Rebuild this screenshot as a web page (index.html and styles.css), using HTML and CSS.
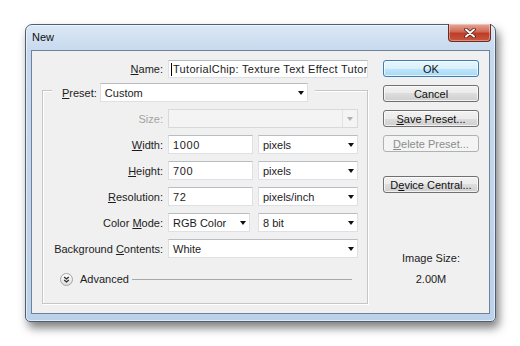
FILE: index.html
```html
<!DOCTYPE html>
<html lang="en">
<head>
  <meta charset="UTF-8" />
  <meta name="viewport" content="width=device-width, initial-scale=1.0" />
  <title>New</title>
  <link rel="stylesheet" href="styles.css">
</head>
<body>
  <div class="window">
    <div class="titlebar">
      <span class="title">New</span>
      <div class="close-btn">
        <svg width="12" height="10" viewBox="0 0 12 10">
          <path d="M2 1.5 L10 8.5 M10 1.5 L2 8.5" stroke="#5b1c12" stroke-width="3.6" stroke-linecap="round" />
          <path d="M2 1.5 L10 8.5 M10 1.5 L2 8.5" stroke="#ffffff" stroke-width="1.9" stroke-linecap="round" />
        </svg>
      </div>
    </div>

    <div class="client">
      <div class="form-col">
        <div class="row name-row">
          <label class="lbl"><u>N</u>ame:</label>
          <div class="field name-field"><span class="caret"></span>TutorialChip: Texture Text Effect Tutorial</div>
        </div>

        <div class="group">
          <div class="legend">
            <label><u>P</u>reset:</label>
            <div class="field combo preset-combo">Custom</div>
          </div>
          <div class="row">
            <label class="lbl lbl-disabled">Size:</label>
            <div class="field combo combo-disabled w-wide"></div>
          </div>
          <div class="row">
            <label class="lbl"><u>W</u>idth:</label>
            <div class="field w-num">1000</div>
            <div class="field combo w-unit">pixels</div>
          </div>
          <div class="row">
            <label class="lbl"><u>H</u>eight:</label>
            <div class="field w-num">700</div>
            <div class="field combo w-unit">pixels</div>
          </div>
          <div class="row">
            <label class="lbl"><u>R</u>esolution:</label>
            <div class="field w-num">72</div>
            <div class="field combo w-unit">pixels/inch</div>
          </div>
          <div class="row">
            <label class="lbl">Color <u>M</u>ode:</label>
            <div class="field combo w-mode">RGB Color</div>
            <div class="field combo w-unit">8 bit</div>
          </div>
          <div class="row">
            <label class="lbl">Background <u>C</u>ontents:</label>
            <div class="field combo w-wide">White</div>
          </div>
          <div class="advanced">
            <svg width="13" height="13" viewBox="0 0 13 13">
              <defs>
                <linearGradient id="advBg" x1="0" y1="0" x2="0" y2="1">
                  <stop offset="0" stop-color="#ffffff" />
                  <stop offset="1" stop-color="#dcdcdc" />
                </linearGradient>
              </defs>
              <circle cx="6.5" cy="6.5" r="6" fill="url(#advBg)" stroke="#a3a3a3" />
              <path d="M4.2 4 L6.5 6 L8.8 4 M4.2 7 L6.5 9 L8.8 7" fill="none" stroke="#2b2b2b" stroke-width="1.2" />
            </svg>
            <span>Advanced</span>
            <span class="adv-line"></span>
          </div>
        </div>
      </div>

      <div class="btn-col">
        <div class="btn btn-default">OK</div>
        <div class="btn">Cancel</div>
        <div class="btn"><u>S</u>ave Preset...</div>
        <div class="btn btn-disabled"><u>D</u>elete Preset...</div>
        <div class="btn btn-device">D<u>e</u>vice Central...</div>
        <div class="img-size">
          <div>Image Size:</div>
          <div class="img-value">2.00M</div>
        </div>
      </div>
    </div>
  </div>
</body>
</html>
```

FILE: styles.css
```css
body {
  margin: 0;
  width: 520px;
  height: 346px;
  overflow: hidden;
  background: #ffffff;
  font-family: "Liberation Sans", Arial, sans-serif;
  font-size: 11px;
  color: #1c1c1c;
}
u {
  text-decoration: underline;
  text-underline-offset: 1px;
}
.window {
  box-sizing: border-box;
  margin: 24px 0 0 25px;
  width: 471px;
  height: 298px;
  display: flex;
  flex-direction: column;
  border: 1px solid #4f5e70;
  border-radius: 7px 7px 5px 5px;
  background: linear-gradient(#dce8f5, #c6d9ee 26px, #bcd2ea);
  box-shadow: 3px 6px 10px rgba(0, 0, 0, 0.5), inset 0 0 0 1px rgba(255, 255, 255, 0.55);
}
.titlebar {
  height: 25px;
  display: flex;
  justify-content: space-between;
  align-items: flex-start;
}
.title {
  line-height: 25px;
  padding-left: 6px;
  color: #111;
}
.close-btn {
  box-sizing: border-box;
  width: 43px;
  height: 18px;
  margin: -1px 4px 0 0;
  display: flex;
  justify-content: center;
  align-items: center;
  border: 1px solid #6e2a1f;
  border-top: none;
  border-radius: 0 0 4px 4px;
  background: linear-gradient(#e6a898, #d06a56 45%, #bd3d27 55%, #c9563f);
  box-shadow: inset 0 0 0 1px rgba(255, 255, 255, 0.35);
}
.client {
  flex: 1;
  display: flex;
  margin: 0 5px 7px;
  border: 1px solid #6f8299;
  background: #f0f0f0;
}
.form-col {
  width: 337px;
  padding-top: 9px;
}
.row {
  display: flex;
  align-items: center;
  height: 19px;
  margin-top: 7px;
}
.name-row {
  height: 18px;
  margin-top: 0;
}
.lbl {
  width: 120px;
  margin-right: 5px;
  text-align: right;
  white-space: nowrap;
}
.name-row .lbl {
  width: 131px;
}
.lbl-disabled {
  color: #a3a3a3;
}
.field {
  box-sizing: border-box;
  height: 19px;
  display: flex;
  align-items: center;
  padding-left: 4px;
  background: #ffffff;
  border: 1px solid #dde1e6;
  border-top-color: #b9bcc1;
  white-space: nowrap;
  overflow: hidden;
}
.name-field {
  width: 200px;
  height: 18px;
  padding-left: 2px;
  letter-spacing: 0.3px;
}
.caret {
  flex: none;
  width: 1px;
  height: 13px;
  margin-right: 1px;
  background: #000;
}
.combo {
  justify-content: space-between;
}
.combo::after {
  content: "";
  margin: 0 3px 0 auto;
  border-left: 3.5px solid transparent;
  border-right: 3.5px solid transparent;
  border-top: 4px solid #111;
}
.combo-disabled {
  background: #f4f4f4;
  border-color: #d9d9d9;
}
.combo-disabled::before {
  content: "";
  margin-left: auto;
  margin-right: 4px;
  width: 1px;
  height: 17px;
  background: #e4e4e4;
}
.combo-disabled::after {
  margin: 0 4px 0 0;
  border-top-color: #b0b0b0;
}
.w-wide {
  width: 190px;
}
.w-num {
  width: 85px;
  margin-right: 5px;
  letter-spacing: 0.6px;
}
.w-unit {
  width: 100px;
}
.w-mode {
  width: 82px;
  margin-right: 8px;
}
.group {
  box-sizing: border-box;
  width: 326px;
  height: 214px;
  margin: 12px 0 0 10px;
  border: 1px solid #c6c6c6;
  box-shadow: inset 1px 1px 0 #ffffff, 1px 1px 0 #ffffff;
  display: flex;
  flex-direction: column;
}
.legend {
  align-self: flex-start;
  display: flex;
  align-items: center;
  gap: 3px;
  height: 19px;
  margin: -8px 0 0 9px;
  padding: 0 7px 0 10px;
  background: #f0f0f0;
}
.preset-combo {
  width: 208px;
}
.advanced {
  display: flex;
  align-items: center;
  height: 14px;
  margin-top: 14px;
  padding-left: 17px;
  gap: 7px;
}
.adv-line {
  flex: 1;
  height: 1px;
  margin: 1px 15px 0 -4px;
  background: #a8a8a8;
}
.btn-col {
  width: 96px;
  margin-left: 14px;
  padding-top: 9px;
  display: flex;
  flex-direction: column;
  gap: 8px;
}
.btn {
  box-sizing: border-box;
  height: 17px;
  display: flex;
  justify-content: center;
  align-items: center;
  border: 1px solid #707070;
  border-radius: 3px;
  background: linear-gradient(#f2f2f2, #ebebeb 50%, #dddddd 50%, #cfcfcf);
  box-shadow: inset 0 0 0 1px rgba(255, 255, 255, 0.7);
  color: #111;
}
.btn-default {
  border-color: #3c7fb1;
  background: linear-gradient(#eaf6fd, #d9f0fc 50%, #bee6fd 50%, #a7d9f5);
}
.btn-disabled {
  border-color: #adb2b5;
  background: #f4f4f4;
  box-shadow: none;
  color: #8c8c8c;
}
.btn-device {
  margin-top: 16px;
}
.img-size {
  margin-top: 50px;
  text-align: center;
  line-height: 14px;
}
.img-value {
  margin-top: 7px;
}
```
